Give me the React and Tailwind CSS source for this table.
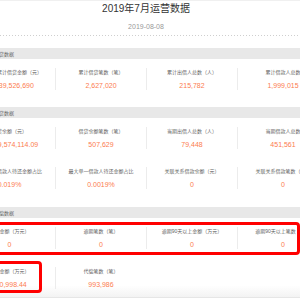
import React from "react";

const LABEL = "text-[5px] leading-[8px] text-[#5f5f5f] whitespace-nowrap font-['Liberation_Sans','Noto_Sans_CJK_SC',sans-serif]";
const VALUE = "mt-[6px] text-[7px] leading-[8px] text-[#fc7c4f] whitespace-nowrap font-['Liberation_Sans',Arial,sans-serif]";

function Cell({ label, value, sep }) {
  return (
    <div className={sep ? "flex flex-col items-center h-[22px] border-l border-[#ececec]" : "flex flex-col items-center h-[22px]"}>
      <div className={LABEL}>{label}</div>
      <div className={VALUE}>{value}</div>
    </div>
  );
}

function Band({ title, mt }) {
  return (
    <div className={mt + " h-[11px] bg-[#e8e8e8] pl-[20px] text-[5px] leading-[11px] text-[#666] whitespace-nowrap font-['Noto_Sans_CJK_SC',sans-serif]"}>
      {title}
    </div>
  );
}

export default function App() {
  return (
    <div className="w-[300px] h-[300px] overflow-hidden bg-white">
      <div className="w-[364px] ml-[-36px] border-t border-[#f0f0f0]">
        <div className="text-center text-[10px] leading-[15px] text-[#333] font-['Liberation_Sans','Noto_Sans_CJK_SC',sans-serif]">
          2019年7月运营数据
        </div>
        <div className="mt-[6px] text-center text-[7px] leading-[10px] text-[#999] font-['Liberation_Sans',Arial,sans-serif]">
          2019-08-08
        </div>
        <div className="mt-[3px] h-px bg-[repeating-linear-gradient(90deg,#cfcfcf_0,#cfcfcf_1px,transparent_1px,transparent_3px)]" />

        <Band title="累计借贷数据" mt="mt-[12px]" />
        <div className="grid grid-cols-4 py-[9px] h-[40px]">
          <Cell label="成立以来累计借贷金额（元）" value="12,339,526,690" />
          <Cell label="累计借贷笔数（笔）" value="2,627,020" sep />
          <Cell label="累计出借人总数（人）" value="215,782" sep />
          <Cell label="累计借款人总数" value="1,999,015" sep />
        </div>

        <Band title="当期借贷数据" mt="mt-[8px]" />
        <div className="grid grid-cols-4 py-[9px] h-[40px]">
          <Cell label="借贷余额（元）" value="11,289,574,114.09" />
          <Cell label="借贷余额笔数（笔）" value="507,629" sep />
          <Cell label="当期出借人总数（人）" value="79,448" sep />
          <Cell label="当期借款人总数" value="451,561" sep />
        </div>
        <div className="grid grid-cols-4 py-[9px] h-[40px]">
          <Cell label="最大十户借款人待还金额占比" value="0.019%" />
          <Cell label="最大单一借款人待还金额占比" value="0.0019%" sep />
          <Cell label="关联关系借款余额（元）" value="0" sep />
          <Cell label="关联关系借款笔数（笔）" value="0" sep />
        </div>

        <Band title="逾期代偿数据" mt="mt-[9px]" />
        <div className="relative grid grid-cols-4 py-[9px] h-[40px]">
          <Cell label="逾期金额（万元）" value="0" />
          <Cell label="逾期笔数（笔）" value="0" sep />
          <Cell label="逾期90天以上金额（万元）" value="0" sep />
          <Cell label="逾期90天以上笔数（笔）" value="0" sep />
          <div className="absolute top-[4px] bottom-[3px] left-[-10px] right-[28px] border-[3px] border-[#ff0000] rounded-[4px]" />
        </div>
        <div className="relative grid grid-cols-4 py-[9px] h-[40px] border-b border-[#e6e6e6] bg-linear-to-b from-white from-70% to-[#f3f3f3]">
          <Cell label="代偿金额（万元）" value="110,998.44" />
          <Cell label="代偿笔数（笔）" value="993,986" sep />
          <div />
          <div />
          <div className="absolute top-[3px] bottom-[4px] left-[-10px] w-[88px] border-[3px] border-[#ff0000] rounded-[4px]" />
        </div>
      </div>
    </div>
  );
}
